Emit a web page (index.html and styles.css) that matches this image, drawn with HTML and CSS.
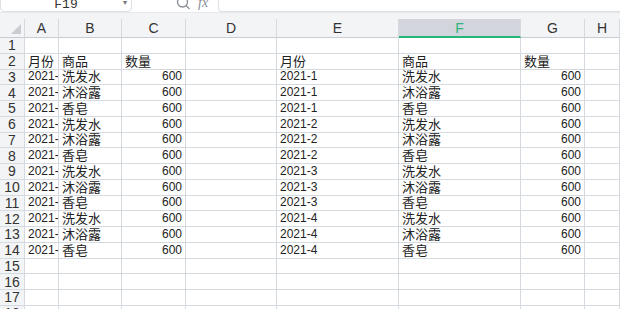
FILE: index.html
```html
<!DOCTYPE html>
<html lang="zh-CN">
<head>
    <meta charset="UTF-8">
    <title>工作表</title>
    <link rel="stylesheet" href="styles.css">
</head>
<body>
    <!-- Formula bar (scrolled so only its lower part shows) -->
    <div class="toolbar">
        <div class="name-box">
            <span class="name-text">F19</span>
            <span class="caret">▾</span>
        </div>
        <div class="fx-tools">
            <svg class="zoom-icon" width="16" height="16" viewBox="0 0 16 16">
                <circle cx="6.5" cy="3" r="5" fill="none" stroke="#8a8f96" stroke-width="1.3"/>
                <line x1="10" y1="6.5" x2="13.5" y2="10" stroke="#8a8f96" stroke-width="1.3"/>
            </svg>
            <span class="fx">fx</span>
        </div>
        <div class="formula-box"></div>
    </div>
    <div class="band"></div>

    <div class="sheet" id="sheet"></div>

    <script>
        // Column letters and row data for the sheet
        const cols = ['A', 'B', 'C', 'D', 'E', 'F', 'G', 'H', ''];
        const goods = ['洗发水', '沐浴露', '香皂'];
        const rows = [
            [],
            ['月份', '商品', '数量', '', '月份', '商品', '数量']
        ];
        for (let m = 1; m <= 4; m++) {
            for (const g of goods) {
                rows.push(['2021-' + m, g, '600', '', '2021-' + m, g, '600']);
            }
        }
        while (rows.length < 18) rows.push([]);

        const sheet = document.getElementById('sheet');

        function cell(text, cls) {
            const div = document.createElement('div');
            div.className = cls;
            div.textContent = text;
            sheet.appendChild(div);
        }

        // header row
        cell('', 'corner');
        cols.forEach(c => cell(c, c === 'F' ? 'col-head active' : 'col-head'));

        rows.forEach((r, i) => {
            cell(String(i + 1), 'row-head');
            for (let c = 0; c < 9; c++) {
                const v = r[c] || '';
                let cls = 'cell';
                if (/^\d/.test(v)) cls += ' latin';
                if (i > 1 && (c === 2 || c === 6)) cls += ' num';
                cell(v, cls);
            }
        });
    </script>
</body>
</html>
```

FILE: styles.css
```css
body {
    margin: 0;
    overflow: hidden;
    background: #fff;
    font-family: 'Liberation Sans', 'Noto Sans CJK SC', sans-serif;
    color: #222;
}

.toolbar {
    height: 12px;
    display: flex;
    align-items: flex-end;
    background: #fff;
    overflow: hidden;
}

.name-box {
    width: 132px;
    height: 24px;
    flex: none;
    border: 1px solid #dcdfe3;
    border-radius: 0 0 4px 4px;
    position: relative;
    display: flex;
    justify-content: center;
    align-items: flex-end;
    box-sizing: border-box;
}

.name-text {
    font-family: 'Liberation Mono', monospace;
    font-size: 13px;
    line-height: 13px;
    color: #333;
}

.caret {
    position: absolute;
    right: 4px;
    bottom: 4px;
    font-size: 8px;
    line-height: 8px;
    color: #777;
}

.fx-tools {
    width: 86px;
    flex: none;
    display: flex;
    align-items: flex-end;
    padding-left: 44px;
    box-sizing: border-box;
    gap: 6px;
}

.zoom-icon {
    margin-bottom: -3px;
}

.fx {
    font-family: 'Liberation Serif', serif;
    font-style: italic;
    font-size: 14px;
    line-height: 14px;
    color: #8a8f96;
    margin-bottom: 2px;
}

.formula-box {
    flex: 1;
    height: 24px;
    border: 1px solid #dcdfe3;
    border-right: none;
    border-radius: 0 0 0 4px;
}

.band {
    height: 6px;
    background: #f3f4f6;
    border-top: 1px solid #e6e8eb;
}

.sheet {
    display: grid;
    grid-template-columns: 25px 34px 63px 64px 91px 122px 122px 64px 35px 1fr;
    grid-template-rows: 19px;
    grid-auto-rows: 15.75px;
}

.corner,
.col-head,
.row-head {
    background: #f3f4f6;
    color: #333;
    display: flex;
    align-items: center;
    justify-content: center;
    border-right: 1px solid #d5d9e0;
    border-bottom: 1px solid #c8cdd5;
    box-sizing: border-box;
    overflow: hidden;
}

.corner {
    position: relative;
}

.corner::after {
    content: '';
    position: absolute;
    right: 3px;
    bottom: 3px;
    border-left: 10px solid transparent;
    border-bottom: 10px solid #c9ccd1;
}

.col-head {
    font-size: 14px;
}

.col-head.active {
    background: #d2d5db;
    color: #2db47a;
    border-bottom: 2px solid #25b57a;
}

.row-head {
    font-size: 14px;
    border-bottom-color: #d5d9e0;
}

.cell {
    font-size: 13px;
    line-height: 15px;
    padding: 0 0 0 3px;
    border-right: 1px solid #d5d9e0;
    border-bottom: 1px solid #d5d9e0;
    box-sizing: border-box;
    white-space: nowrap;
    overflow: hidden;
    display: flex;
    align-items: flex-end;
}

.cell.latin {
    font-size: 12px;
}

.cell.num {
    justify-content: flex-end;
    padding: 0 3px 0 0;
}
```
